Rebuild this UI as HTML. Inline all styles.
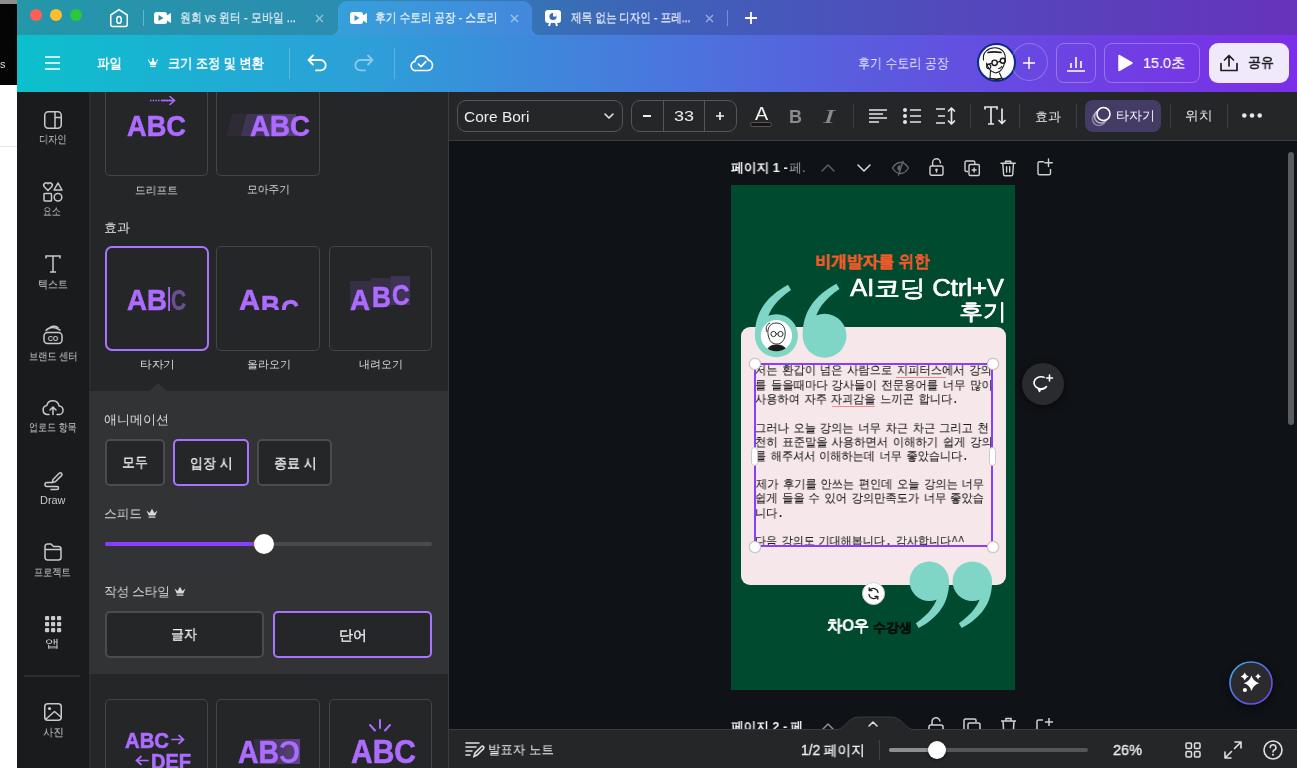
<!DOCTYPE html><html><head><meta charset="utf-8"><style>
*{box-sizing:border-box;margin:0;padding:0}
html,body{width:1297px;height:768px;overflow:hidden;background:#fff;font-family:"Liberation Sans",sans-serif}
.a{position:absolute}
.t{position:absolute;white-space:nowrap;transform-origin:0 0;will-change:transform}
svg{overflow:visible}
</style></head><body><div class="a" style="left:0px;top:0px;width:17px;height:768px;background:#fff"></div><div class="a" style="left:0px;top:0px;width:17px;height:4px;background:#8e8e8e"></div><div class="a" style="left:0px;top:4px;width:17px;height:81px;background:#050505"></div><div class="a" style="left:0px;top:146px;width:17px;height:1px;background:#e6e6e6"></div><div class="t" style="left:0.00px;top:59.00px;font-size:11px;line-height:11px;color:#ddd;font-weight:400;font-family:'Liberation Sans',sans-serif;">s</div><div class="a" style="left:17px;top:0px;width:1280px;height:35px;background:linear-gradient(90deg,#2497a9 0%,#2b8db0 25%,#3e62b8 50%,#5447bd 75%,#6633b9 100%)"></div><div class="a" style="left:17px;top:35px;width:1280px;height:57px;background:linear-gradient(90deg,#0cc0cc 0%,#22aad5 18%,#2e9ed8 28%,#4480dc 45%,#5a5cde 66%,#6c43e3 82%,#7c2ee8 100%)"></div><div class="a" style="left:30px;top:9px;width:12px;height:12px;border-radius:50%;background:#fe5f57"></div><div class="a" style="left:50px;top:9px;width:12px;height:12px;border-radius:50%;background:#febc2e"></div><div class="a" style="left:70px;top:9px;width:12px;height:12px;border-radius:50%;background:#28c840"></div><svg class="a" style="left:109px;top:8px" width="20" height="20" viewBox="0 0 20 20"><path d="M1.75 7 L10 1.6 L18.25 7 V16.5 a2 2 0 0 1 -2 2 H3.75 a2 2 0 0 1 -2 -2 Z" fill="none" stroke="#fff" stroke-width="1.5" stroke-linejoin="round"/><ellipse cx="10" cy="11.9" rx="2.3" ry="3.4" fill="none" stroke="#fff" stroke-width="1.5"/></svg><div class="a" style="left:143px;top:10px;width:1px;height:16px;background:rgba(255,255,255,.3)"></div><div class="a" style="left:330px;top:27px;width:8px;height:8px;background:radial-gradient(circle at 0 0,transparent 8px,#379fda 8.5px)"></div><div class="a" style="left:532px;top:27px;width:8px;height:8px;background:radial-gradient(circle at 100% 0,transparent 8px,#4388dc 8.5px)"></div><div class="a" style="left:338px;top:1px;width:194px;height:34px;border-radius:9px 9px 0 0;background:linear-gradient(90deg,#379fda,#4388dc)"></div><svg class="a" style="left:154px;top:12px" width="18" height="12" viewBox="0 0 18 12"><rect x="0" y="0" width="13" height="12" rx="2.5" fill="#fff"/><path d="M12 4 L17 1 V11 L12 8 Z" fill="#fff"/><path d="M4.5 3 L9.5 6 L4.5 9 Z" fill="#2590ac"/></svg><div class="t" style="left:180.16px;top:11.00px;font-size:13px;line-height:13px;color:#e6eef4;font-weight:400;font-family:'Liberation Sans',sans-serif;transform:scaleX(0.8444);-webkit-text-stroke:0.25px currentColor">원회 vs 윈터 - 모바일 ...</div><svg class="a" style="left:315.5px;top:14.5px" width="7" height="7" viewBox="0 0 7 7"><path d="M0 0 L7 7 M7 0 L0 7" stroke="rgba(255,255,255,.5)" stroke-width="1.2"/></svg><svg class="a" style="left:350px;top:12px" width="18" height="12" viewBox="0 0 18 12"><rect x="0" y="0" width="13" height="12" rx="2.5" fill="#fff"/><path d="M12 4 L17 1 V11 L12 8 Z" fill="#fff"/><path d="M4.5 3 L9.5 6 L4.5 9 Z" fill="#3a96d9"/></svg><div class="t" style="left:375.18px;top:11.00px;font-size:13px;line-height:13px;color:#eef4fb;font-weight:400;font-family:'Liberation Sans',sans-serif;transform:scaleX(0.8219);-webkit-text-stroke:0.25px currentColor">후기 수토리 공장 - 스토리</div><svg class="a" style="left:510.5px;top:14.5px" width="7" height="7" viewBox="0 0 7 7"><path d="M0 0 L7 7 M7 0 L0 7" stroke="rgba(255,255,255,.5)" stroke-width="1.2"/></svg><svg class="a" style="left:544px;top:9px" width="18" height="18" viewBox="0 0 18 18"><rect x="1" y="1" width="16" height="13" rx="3" fill="#fff"/><path d="M6 14 L5 17 M12 14 L13 17" stroke="#fff" stroke-width="2"/><circle cx="9" cy="7.5" r="3.6" fill="#3f66bd"/><path d="M9 7.5 V3.9 A3.6 3.6 0 0 1 12.6 7.5 Z" fill="#fff"/></svg><div class="t" style="left:571.00px;top:11.00px;font-size:13px;line-height:13px;color:#e8ecf8;font-weight:400;font-family:'Liberation Sans',sans-serif;transform:scaleX(0.8151);-webkit-text-stroke:0.25px currentColor">제목 없는 디자인 - 프레...</div><svg class="a" style="left:705.5px;top:14.5px" width="7" height="7" viewBox="0 0 7 7"><path d="M0 0 L7 7 M7 0 L0 7" stroke="rgba(255,255,255,.5)" stroke-width="1.2"/></svg><div class="a" style="left:727px;top:10px;width:1px;height:16px;background:rgba(255,255,255,.3)"></div><svg class="a" style="left:744px;top:11px" width="14" height="14" viewBox="0 0 14 14"><path d="M7 1 V13 M1 7 H13" stroke="#fff" stroke-width="1.8"/></svg><svg class="a" style="left:45px;top:56px" width="15" height="14" viewBox="0 0 15 14"><path d="M0 1 H15 M0 7 H15 M0 13 H15" stroke="#fff" stroke-width="1.6"/></svg><div class="t" style="left:97.00px;top:55.50px;font-size:14px;line-height:14px;color:#fff;font-weight:700;font-family:'Liberation Sans',sans-serif;transform:scaleX(0.8889);">파일</div><svg class="a" style="left:148px;top:58px" width="10" height="9" viewBox="0 0 10 9"><path d="M0.5 2.5 L2.3 7 H7.7 L9.5 2.5 L7 4.6 L5 1 L3 4.6 Z M2.3 7.8 H7.7 V9 H2.3Z" fill="#fff"/><circle cx="5" cy="0.9" r="0.9" fill="#fff"/><circle cx="0.6" cy="2.2" r="0.7" fill="#fff"/><circle cx="9.4" cy="2.2" r="0.7" fill="#fff"/></svg><div class="t" style="left:168.13px;top:55.50px;font-size:14px;line-height:14px;color:#fff;font-weight:700;font-family:'Liberation Sans',sans-serif;transform:scaleX(0.8716);">크기 조정 및 변환</div><div class="a" style="left:289px;top:48px;width:1px;height:31px;background:rgba(255,255,255,.22)"></div><svg class="a" style="left:307px;top:54px" width="21" height="17" viewBox="0 0 21 17"><path d="M6 1.5 L1.5 6 L6 10.5 M1.5 6 H13.5 a5.2 5.2 0 0 1 0 10.4 H9" fill="none" stroke="#fff" stroke-width="1.8" stroke-linecap="round" stroke-linejoin="round"/></svg><svg class="a" style="left:353px;top:54px" width="21" height="17" viewBox="0 0 21 17"><g transform="translate(21,0) scale(-1,1)"><path d="M6 1.5 L1.5 6 L6 10.5 M1.5 6 H13.5 a5.2 5.2 0 0 1 0 10.4 H9" fill="none" stroke="rgba(255,255,255,.45)" stroke-width="1.8" stroke-linecap="round" stroke-linejoin="round"/></g></svg><div class="a" style="left:394px;top:48px;width:1px;height:31px;background:rgba(255,255,255,.22)"></div><svg class="a" style="left:410px;top:53px" width="24" height="19" viewBox="0 0 24 19"><path d="M6.5 17.5 H17.5 a5.2 5.2 0 0 0 0.8 -10.3 a7 7 0 0 0 -13.3 1.2 a4.6 4.6 0 0 0 1.5 9.1 Z" fill="none" stroke="#fff" stroke-width="1.7" stroke-linejoin="round"/><path d="M8.3 11 L11 13.6 L15.8 8.6" fill="none" stroke="#fff" stroke-width="1.7" stroke-linecap="round" stroke-linejoin="round"/></svg><div class="t" style="left:858.14px;top:55.50px;font-size:14px;line-height:14px;color:#ebe8fa;font-weight:400;font-family:'Liberation Sans',sans-serif;transform:scaleX(0.8571);">후기 수토리 공장</div><div class="a" style="left:977px;top:43px;width:39px;height:39px;border-radius:50%;background:#0c2a8a"></div><div class="a" style="left:979px;top:45px;width:35px;height:35px;border-radius:50%;background:#fbfbfb"></div><svg class="a" style="left:977px;top:43px" width="39" height="39" viewBox="0 0 39 39"><clipPath id="avc"><circle cx="19.5" cy="19.5" r="17.5"/></clipPath><g clip-path="url(#avc)" fill="none" stroke="#1a1a1a" stroke-width="1.1" stroke-linecap="round"><path d="M3 38 C 8 34.5, 14 35, 19 36 C 24 35, 30 34.5, 36 38 V42 H3 Z" fill="#1a1a1a"/><path d="M6.5 17 C 5 9, 12 4.6, 18 4.7 C 24 4.8, 28.5 9, 28.3 15.5"/><path d="M9.5 20 C 10.5 25, 13.5 28.5, 18.5 30 C 23 29.5, 27 25, 28.3 16"/><path d="M11 9.5 C 15 8.5, 20 8.8, 24 9.5" stroke-width="1.6"/><circle cx="17.6" cy="19.8" r="2.7" stroke-width="1.4"/><circle cx="25.8" cy="17.8" r="2.5" stroke-width="1.4"/><path d="M20.3 19.2 L23.3 18.4 M14.9 20.2 L9.5 21.5"/><circle cx="11.7" cy="23.5" r="2.1"/><path d="M13.5 27.5 L13 35.5 M22.5 30 L24.5 34.5 M21.5 25.5 C 23 25.5, 24.2 24.6, 24.8 23.5"/></g></svg><div class="a" style="left:1011px;top:43px;width:37px;height:38px;border-radius:50%;border:1px solid rgba(255,255,255,.25)"></div><svg class="a" style="left:1023px;top:57px" width="12" height="12" viewBox="0 0 12 12"><path d="M6 0 V12 M0 6 H12" stroke="#fff" stroke-width="1.5"/></svg><div class="a" style="left:1056px;top:43px;width:40px;height:40px;border-radius:8px;border:1px solid rgba(255,255,255,.28)"></div><svg class="a" style="left:1066px;top:53px" width="20" height="19" viewBox="0 0 20 19"><path d="M1 18 H19 M5 15 V10 M10 15 V4 M15 15 V8" stroke="#fff" stroke-width="1.6"/></svg><div class="a" style="left:1104px;top:43px;width:96px;height:40px;border-radius:8px;border:1px solid rgba(255,255,255,.28)"></div><svg class="a" style="left:1117px;top:54px" width="16" height="18" viewBox="0 0 16 18"><path d="M2 1.5 L15 9 L2 16.5 Z" fill="#fff" stroke="#fff" stroke-width="1.5" stroke-linejoin="round"/></svg><div class="t" style="left:1143.04px;top:55.00px;font-size:15px;line-height:15px;color:#fff;font-weight:400;font-family:'Liberation Sans',sans-serif;transform:scaleX(0.9643);-webkit-text-stroke:0.15px #fff">15.0초</div><div class="a" style="left:1209px;top:43px;width:80px;height:40px;border-radius:9px;background:#efe9fb"></div><svg class="a" style="left:1219px;top:54px" width="20" height="18" viewBox="0 0 20 18"><path d="M10 12 V1.5 M5.5 6 L10 1.5 L14.5 6 M2 9.5 V16.5 H18 V9.5" fill="none" stroke="#1d1d1f" stroke-width="1.7" stroke-linecap="round" stroke-linejoin="round"/></svg><div class="t" style="left:1248.08px;top:55.00px;font-size:14px;line-height:14px;color:#1d1d1f;font-weight:700;font-family:'Liberation Sans',sans-serif;transform:scaleX(0.9231);">공유</div><div class="a" style="left:17px;top:92px;width:72px;height:676px;background:#1a1b1d"></div><svg class="a" style="left:44px;top:111px" width="18" height="18" viewBox="0 0 18 18"><g fill="none" stroke="#c9cacc" stroke-width="1.5" stroke-linecap="round" stroke-linejoin="round"><rect x="0.75" y="0.75" width="16.5" height="16.5" rx="3.5"/><path d="M11 0.75 V17.25 M11 6.5 H17.25"/></g></svg><div class="t" style="left:39.17px;top:133.50px;font-size:11px;line-height:11px;color:#c9cacc;font-weight:400;font-family:'Liberation Sans',sans-serif;transform:scaleX(0.8333);">디자인</div><svg class="a" style="left:43px;top:182px" width="20" height="20" viewBox="0 0 20 20"><g fill="none" stroke="#c9cacc" stroke-width="1.5" stroke-linecap="round" stroke-linejoin="round"><path d="M5 8.5 L1.3 4.8 A2.2 2.2 0 0 1 5 1.8 A2.2 2.2 0 0 1 8.7 4.8 Z"/><path d="M15 1 L19 8 H11 Z"/><rect x="1" y="11.5" width="7.5" height="7.5" rx="0.8"/><circle cx="15" cy="15.2" r="3.8"/></g></svg><div class="t" style="left:43.20px;top:205.50px;font-size:11px;line-height:11px;color:#c9cacc;font-weight:400;font-family:'Liberation Sans',sans-serif;transform:scaleX(0.8000);">요소</div><svg class="a" style="left:45px;top:255px" width="16" height="18" viewBox="0 0 16 18"><g fill="none" stroke="#c9cacc" stroke-width="1.5"><path d="M1 3.5 V1 H15 V3.5 M8 1 V17 M5 17 H11"/></g></svg><div class="t" style="left:38.10px;top:278.50px;font-size:11px;line-height:11px;color:#c9cacc;font-weight:400;font-family:'Liberation Sans',sans-serif;transform:scaleX(0.9032);">텍스트</div><svg class="a" style="left:43px;top:325px" width="20" height="20" viewBox="0 0 20 20"><g fill="none" stroke="#c9cacc" stroke-width="1.5" stroke-linecap="round" stroke-linejoin="round"><rect x="1" y="7.5" width="18" height="11" rx="3.5"/><path d="M3 5.5 C 6 2 11 1.5 17 5 M6 3.5 C 8 1 12 0.5 15 2.5"/></g><text x="10" y="16.3" font-size="7" font-weight="bold" fill="#c9cacc" text-anchor="middle" font-family="Liberation Sans">CO</text></svg><div class="t" style="left:29.16px;top:350.50px;font-size:11px;line-height:11px;color:#c9cacc;font-weight:400;font-family:'Liberation Sans',sans-serif;transform:scaleX(0.8364);">브랜드 센터</div><svg class="a" style="left:42px;top:398px" width="22" height="18" viewBox="0 0 22 18"><g fill="none" stroke="#c9cacc" stroke-width="1.5" stroke-linecap="round" stroke-linejoin="round"><path d="M7 16.5 H5.5 a4.5 4.5 0 0 1 -0.8 -8.9 a6.3 6.3 0 0 1 12.3 0.3 a4.3 4.3 0 0 1 -0.5 8.6 H15"/><path d="M11 16.5 V9.5 M8 12 L11 9 L14 12"/></g></svg><div class="t" style="left:29.18px;top:422.00px;font-size:11px;line-height:11px;color:#c9cacc;font-weight:400;font-family:'Liberation Sans',sans-serif;transform:scaleX(0.8214);">업로드 항목</div><svg class="a" style="left:44px;top:471px" width="18" height="18" viewBox="0 0 18 18"><g fill="none" stroke="#c9cacc" stroke-width="1.5" stroke-linecap="round" stroke-linejoin="round"><path d="M9 8.5 L15.2 2.3 a1.6 1.6 0 0 1 2.3 2.3 L11.3 10.8 L8.3 11.5 Z"/><path d="M8 11.5 H3 a2 2 0 0 0 0 4 H13 a1.5 1.5 0 0 1 0 3 H7"/></g></svg><div class="t" style="left:39.96px;top:495.00px;font-size:10.5px;line-height:10.5px;color:#c9cacc;font-weight:400;font-family:'Liberation Sans',sans-serif;transform:scaleX(1.0417);">Draw</div><svg class="a" style="left:44px;top:543px" width="18" height="18" viewBox="0 0 18 18"><g fill="none" stroke="#c9cacc" stroke-width="1.5" stroke-linecap="round" stroke-linejoin="round"><path d="M1 3.5 a2.5 2.5 0 0 1 2.5 -2.5 H7 L9.5 3.5 H14.5 a2.5 2.5 0 0 1 2.5 2.5 V14.5 a2.5 2.5 0 0 1 -2.5 2.5 H3.5 a2.5 2.5 0 0 1 -2.5 -2.5 Z M1 6.5 H17"/></g></svg><div class="t" style="left:34.17px;top:566.50px;font-size:11px;line-height:11px;color:#c9cacc;font-weight:400;font-family:'Liberation Sans',sans-serif;transform:scaleX(0.8333);">프로젝트</div><svg class="a" style="left:44px;top:615px" width="18" height="18" viewBox="0 0 18 18"><rect x="1" y="1" width="4.2" height="4.2" rx="1" fill="#c9cacc"/><rect x="1" y="7" width="4.2" height="4.2" rx="1" fill="#c9cacc"/><rect x="1" y="13" width="4.2" height="4.2" rx="1" fill="#c9cacc"/><rect x="7" y="1" width="4.2" height="4.2" rx="1" fill="#c9cacc"/><rect x="7" y="7" width="4.2" height="4.2" rx="1" fill="#c9cacc"/><rect x="7" y="13" width="4.2" height="4.2" rx="1" fill="#c9cacc"/><rect x="13" y="1" width="4.2" height="4.2" rx="1" fill="#c9cacc"/><rect x="13" y="7" width="4.2" height="4.2" rx="1" fill="#c9cacc"/><rect x="13" y="13" width="4.2" height="4.2" rx="1" fill="#c9cacc"/></svg><div class="t" style="left:44.67px;top:638.00px;font-size:11px;line-height:11px;color:#c9cacc;font-weight:400;font-family:'Liberation Sans',sans-serif;transform:scaleX(1.3333);">앱</div><div class="a" style="left:24px;top:675px;width:56px;height:2px;background:#2c2d30"></div><svg class="a" style="left:44px;top:703px" width="18" height="18" viewBox="0 0 18 18"><g fill="none" stroke="#c9cacc" stroke-width="1.5" stroke-linecap="round" stroke-linejoin="round"><rect x="0.75" y="0.75" width="16.5" height="16.5" rx="3"/><path d="M1.5 16.5 L10.5 8.5 L17 14"/></g><circle cx="5.5" cy="5.5" r="1.6" fill="#c9cacc"/></svg><div class="t" style="left:43.05px;top:726.50px;font-size:11px;line-height:11px;color:#c9cacc;font-weight:400;font-family:'Liberation Sans',sans-serif;transform:scaleX(0.9474);">사진</div><div class="a" style="left:89px;top:92px;width:359px;height:676px;background:#252628"></div><div class="a" style="left:448px;top:92px;width:1px;height:676px;background:#3a3b3e"></div><div class="a" style="left:89px;top:92px;width:2px;height:676px;background:#2a2b2d"></div><div class="a" style="left:105px;top:92px;width:103px;height:84px;border:1px solid #444548;border-radius:5px;border-top:none;border-radius:0 0 5px 5px"></div><div class="a" style="left:216px;top:92px;width:104px;height:84px;border:1px solid #444548;border-radius:5px;border-top:none;border-radius:0 0 5px 5px"></div><div class="t" style="left:135.02px;top:184.50px;font-size:11px;line-height:11px;color:#d8d9db;font-weight:400;font-family:'Liberation Sans',sans-serif;transform:scaleX(0.9762);">드리프트</div><div class="t" style="left:247.02px;top:184.00px;font-size:11px;line-height:11px;color:#d8d9db;font-weight:400;font-family:'Liberation Sans',sans-serif;transform:scaleX(0.9756);">모아주기</div><div class="t" style="left:104.00px;top:220.50px;font-size:13px;line-height:13px;color:#e6e7e9;font-weight:400;font-family:'Liberation Sans',sans-serif;">효과</div><div class="a" style="left:105px;top:246px;width:104px;height:105px;border:2px solid #a873ff;border-radius:7px"></div><div class="a" style="left:216px;top:246px;width:104px;height:105px;border:1px solid #444548;border-radius:5px"></div><div class="a" style="left:329px;top:246px;width:103px;height:105px;border:1px solid #444548;border-radius:5px"></div><div class="t" style="left:139.93px;top:358.50px;font-size:11px;line-height:11px;color:#d8d9db;font-weight:400;font-family:'Liberation Sans',sans-serif;transform:scaleX(1.0667);">타자기</div><div class="t" style="left:247.00px;top:358.50px;font-size:11px;line-height:11px;color:#d8d9db;font-weight:400;font-family:'Liberation Sans',sans-serif;">올라오기</div><div class="t" style="left:359.00px;top:358.50px;font-size:11px;line-height:11px;color:#d8d9db;font-weight:400;font-family:'Liberation Sans',sans-serif;">내려오기</div><div class="a" style="left:89px;top:391px;width:359px;height:283px;background:#323335"></div><svg class="a" style="left:148px;top:382px" width="20" height="10" viewBox="0 0 20 10"><path d="M0 10 L10 1 L20 10 Z" fill="#323335"/></svg><div class="t" style="left:104.00px;top:414.00px;font-size:12.5px;line-height:12.5px;color:#d8d9db;font-weight:400;font-family:'Liberation Sans',sans-serif;">애니메이션</div><div class="a" style="left:105px;top:439px;width:60px;height:47px;border:2px solid #4b4c4f;border-radius:5px;background:#252628"></div><div class="a" style="left:173px;top:439px;width:76px;height:47px;border:2px solid #a873ff;border-radius:5px;background:#252628"></div><div class="a" style="left:257px;top:439px;width:75px;height:47px;border:2px solid #4b4c4f;border-radius:5px;background:#252628"></div><div class="t" style="left:122.08px;top:456.00px;font-size:13.5px;line-height:13.5px;color:#f0f0f2;font-weight:400;font-family:'Liberation Sans',sans-serif;transform:scaleX(0.9231);-webkit-text-stroke:0.3px #f0f0f2">모두</div><div class="t" style="left:190.07px;top:456.50px;font-size:13.5px;line-height:13.5px;color:#f0f0f2;font-weight:400;font-family:'Liberation Sans',sans-serif;transform:scaleX(0.9302);-webkit-text-stroke:0.3px #f0f0f2">입장 시</div><div class="t" style="left:274.07px;top:456.50px;font-size:13.5px;line-height:13.5px;color:#f0f0f2;font-weight:400;font-family:'Liberation Sans',sans-serif;transform:scaleX(0.9302);-webkit-text-stroke:0.3px #f0f0f2">종료 시</div><div class="t" style="left:104.03px;top:508.00px;font-size:12.5px;line-height:12.5px;color:#d8d9db;font-weight:400;font-family:'Liberation Sans',sans-serif;transform:scaleX(0.9730);">스피드</div><svg class="a" style="left:146px;top:508px" width="12" height="10" viewBox="0 0 12 10"><path d="M0.5 2.5 L2.7 7.5 H9.3 L11.5 2.5 L8.4 5 L6 0.8 L3.6 5 Z M2.6 8.5 H9.4 V9.8 H2.6 Z" fill="#d8d9db"/></svg><div class="a" style="left:105px;top:542px;width:327px;height:4px;border-radius:2px;background:#4a4b4e"></div><div class="a" style="left:105px;top:542px;width:160px;height:4px;border-radius:2px;background:#8b3dff"></div><div class="a" style="left:254px;top:534px;width:20px;height:20px;border-radius:50%;background:#fff"></div><div class="t" style="left:104.03px;top:586.00px;font-size:12.5px;line-height:12.5px;color:#d8d9db;font-weight:400;font-family:'Liberation Sans',sans-serif;transform:scaleX(0.9692);">작성 스타일</div><svg class="a" style="left:174px;top:586px" width="12" height="10" viewBox="0 0 12 10"><path d="M0.5 2.5 L2.7 7.5 H9.3 L11.5 2.5 L8.4 5 L6 0.8 L3.6 5 Z M2.6 8.5 H9.4 V9.8 H2.6 Z" fill="#d8d9db"/></svg><div class="a" style="left:105px;top:611px;width:159px;height:47px;border:2px solid #4b4c4f;border-radius:5px;background:#252628"></div><div class="a" style="left:273px;top:611px;width:159px;height:47px;border:2px solid #a873ff;border-radius:5px;background:#252628"></div><div class="t" style="left:171.07px;top:628.00px;font-size:13.5px;line-height:13.5px;color:#f0f0f2;font-weight:400;font-family:'Liberation Sans',sans-serif;transform:scaleX(0.9259);-webkit-text-stroke:0.3px #f0f0f2">글자</div><div class="t" style="left:339.00px;top:628.50px;font-size:13.5px;line-height:13.5px;color:#f0f0f2;font-weight:400;font-family:'Liberation Sans',sans-serif;-webkit-text-stroke:0.3px #f0f0f2">단어</div><div class="a" style="left:105px;top:699px;width:103px;height:90px;border:1px solid #444548;border-radius:5px"></div><div class="a" style="left:216px;top:699px;width:104px;height:90px;border:1px solid #444548;border-radius:5px"></div><div class="a" style="left:329px;top:699px;width:103px;height:90px;border:1px solid #444548;border-radius:5px"></div><svg class="a" style="left:0px;top:0px" width="1297" height="768" viewBox="0 0 1297 768"><text x="127" y="136" font-family="Liberation Sans" font-weight="bold" font-size="30" fill="#ad6cff" stroke="#ad6cff" stroke-width="0.6" textLength="59" lengthAdjust="spacingAndGlyphs" >ABC</text><path d="M150 100.5 H174" stroke="#ad6cff" stroke-width="1.6" stroke-dasharray="1.5 1.2"/><path d="M162 100.5 H174 M170 96.5 L174.5 100.5 L170 104.5" fill="none" stroke="#ad6cff" stroke-width="1.6" stroke-linecap="round"/><defs><linearGradient id="trail" x1="0" x2="1"><stop offset="0" stop-color="#a96dff" stop-opacity="0"/><stop offset="1" stop-color="#a96dff" stop-opacity=".45"/></linearGradient></defs><path d="M226 136 L232 114 H296 V136 Z" fill="#a96dff" fill-opacity=".07"/><path d="M241 136 L247 114 H296 V136 Z" fill="#a96dff" fill-opacity=".16"/><path d="M268 136 L272 114 H296 V136 Z" fill="#a96dff" fill-opacity=".12"/><text x="250" y="136" font-family="Liberation Sans" font-weight="bold" font-size="30" fill="#ad6cff" stroke="#ad6cff" stroke-width="0.6" textLength="60" lengthAdjust="spacingAndGlyphs" >ABC</text><text x="127" y="310" font-family="Liberation Sans" font-weight="bold" font-size="30" fill="#ad6cff" stroke="#ad6cff" stroke-width="0.6" textLength="40" lengthAdjust="spacingAndGlyphs" >AB</text><rect x="168.2" y="287" width="1.8" height="24" fill="#ad6cff"/><text x="171" y="310" font-family="Liberation Sans" font-weight="bold" font-size="30" fill="#6b4f90" stroke="#6b4f90" stroke-width="0.6" textLength="15" lengthAdjust="spacingAndGlyphs" >C</text><clipPath id="rc"><rect x="200" y="270" width="150" height="40"/></clipPath><g clip-path="url(#rc)"><text x="239" y="310" font-family="Liberation Sans" font-weight="bold" font-size="30" fill="#ad6cff" stroke="#ad6cff" stroke-width="0.6" textLength="21" lengthAdjust="spacingAndGlyphs" >A</text><text x="261" y="316" font-family="Liberation Sans" font-weight="bold" font-size="30" fill="#ad6cff" stroke="#ad6cff" stroke-width="0.6" textLength="19" lengthAdjust="spacingAndGlyphs" >B</text><text x="281" y="319.5" font-family="Liberation Sans" font-weight="bold" font-size="30" fill="#ad6cff" stroke="#ad6cff" stroke-width="0.6" textLength="18" lengthAdjust="spacingAndGlyphs" >C</text></g><linearGradient id="fg" x1="0" y1="0" x2="0" y2="1"><stop offset="0" stop-color="#a96dff" stop-opacity="0"/><stop offset="1" stop-color="#a96dff" stop-opacity=".5"/></linearGradient><rect x="350" y="281" width="21" height="29" fill="#a96dff" fill-opacity=".14"/><rect x="371" y="278" width="20" height="29" fill="#a96dff" fill-opacity=".14"/><rect x="391" y="276" width="19" height="29" fill="#a96dff" fill-opacity=".2"/><text x="350" y="310" font-family="Liberation Sans" font-weight="bold" font-size="30" fill="#ad6cff" stroke="#ad6cff" stroke-width="0.6" textLength="20" lengthAdjust="spacingAndGlyphs" >A</text><text x="372" y="307" font-family="Liberation Sans" font-weight="bold" font-size="30" fill="#ad6cff" stroke="#ad6cff" stroke-width="0.6" textLength="19" lengthAdjust="spacingAndGlyphs" >B</text><text x="392" y="305" font-family="Liberation Sans" font-weight="bold" font-size="30" fill="#ad6cff" stroke="#ad6cff" stroke-width="0.6" textLength="17.5" lengthAdjust="spacingAndGlyphs" >C</text><text x="125" y="748" font-family="Liberation Sans" font-weight="bold" font-size="22" fill="#ad6cff" stroke="#ad6cff" stroke-width="0.6" textLength="44" lengthAdjust="spacingAndGlyphs" >ABC</text><path d="M172 739.5 H183 M179 735.5 L183.5 739.5 L179 743.5" fill="none" stroke="#ad6cff" stroke-width="1.7" stroke-linecap="round"/><path d="M148 760.5 H137 M141 756.5 L136.5 760.5 L141 764.5" fill="none" stroke="#ad6cff" stroke-width="1.7" stroke-linecap="round"/><text x="151" y="769" font-family="Liberation Sans" font-weight="bold" font-size="22" fill="#ad6cff" stroke="#ad6cff" stroke-width="0.6" textLength="40" lengthAdjust="spacingAndGlyphs" >DEF</text><linearGradient id="hg" x1="0" x2="1"><stop offset="0" stop-color="#a96dff" stop-opacity=".12"/><stop offset="1" stop-color="#a96dff" stop-opacity=".42"/></linearGradient><rect x="254" y="739" width="46" height="25" fill="url(#hg)"/><text x="238" y="763" font-family="Liberation Sans" font-weight="bold" font-size="32" fill="#ad6cff" stroke="#ad6cff" stroke-width="0.6" textLength="41" lengthAdjust="spacingAndGlyphs" >AB</text><g transform="translate(579,0) scale(-1,1)"><text x="279" y="763" font-family="Liberation Sans" font-weight="bold" font-size="32" fill="#a96dff" textLength="21" lengthAdjust="spacingAndGlyphs">C</text></g><text x="351" y="763" font-family="Liberation Sans" font-weight="bold" font-size="33" fill="#ad6cff" stroke="#ad6cff" stroke-width="0.6" textLength="65" lengthAdjust="spacingAndGlyphs" >ABC</text><path d="M370 725 L375 730.5 M380 720 V728 M390 725 L385 730.5" stroke="#ad6cff" stroke-width="2" stroke-linecap="round"/></svg><div class="a" style="left:449px;top:92px;width:848px;height:49px;background:#252628;border-bottom:1px solid #3a3b3e"></div><div class="a" style="left:457px;top:100px;width:166px;height:32px;border:1px solid #55565a;border-radius:9px"></div><div class="t" style="left:463.97px;top:108.50px;font-size:15px;line-height:15px;color:#eeeeef;font-weight:400;font-family:'Liberation Sans',sans-serif;transform:scaleX(1.0328);">Core Bori</div><svg class="a" style="left:604px;top:113px" width="10" height="6" viewBox="0 0 10 6"><path d="M1 1 L5 5 L9 1" fill="none" stroke="#e6e6e8" stroke-width="1.6" stroke-linecap="round" stroke-linejoin="round"/></svg><div class="a" style="left:631px;top:100px;width:106px;height:32px;border:1px solid #55565a;border-radius:9px"></div><div class="a" style="left:663px;top:100px;width:1px;height:32px;background:#55565a"></div><div class="a" style="left:704px;top:100px;width:1px;height:32px;background:#55565a"></div><div class="a" style="left:643px;top:115.2px;width:8px;height:1.8px;background:#eee"></div><div class="t" style="left:673.80px;top:108.00px;font-size:15px;line-height:15px;color:#eeeeef;font-weight:400;font-family:'Liberation Sans',sans-serif;transform:scaleX(1.2000);">33</div><svg class="a" style="left:716px;top:112px" width="8" height="8" viewBox="0 0 8 8"><path d="M4 0 V8 M0 4 H8" stroke="#eee" stroke-width="1.7"/></svg><div class="t" style="left:754.50px;top:103.50px;font-size:19px;line-height:19px;color:#f4f4f4;font-weight:400;font-family:'Liberation Sans',sans-serif;transform:scaleX(1.0385);">A</div><div class="a" style="left:750px;top:122px;width:22px;height:4.5px;border-radius:2.5px;background:#151515;border:1px solid #5a5552"></div><div class="t" style="left:789.00px;top:107.50px;font-size:18px;line-height:18px;color:#8a8b8e;font-weight:700;font-family:'Liberation Sans',sans-serif;">B</div><div class="t" style="left:823.00px;top:107.50px;font-size:18px;line-height:18px;color:#8a8b8e;font-weight:400;font-family:'Liberation Sans',sans-serif;transform:scaleX(2.0000);font-style:italic;font-family:Liberation Serif,serif">I</div><div class="a" style="left:853px;top:104px;width:1px;height:24px;background:#3e3f42"></div><svg class="a" style="left:869px;top:109px" width="18" height="14" viewBox="0 0 18 14"><path d="M0 1 H18 M0 5 H14 M0 9 H18 M0 13 H10" stroke="#e6e6e8" stroke-width="1.7"/></svg><svg class="a" style="left:903px;top:108px" width="18" height="16" viewBox="0 0 18 16"><g fill="#e6e6e8"><circle cx="2" cy="2" r="2"/><circle cx="2" cy="8" r="2"/><circle cx="2" cy="14" r="2"/></g><path d="M7 2 H18 M7 8 H18 M7 14 H18" stroke="#e6e6e8" stroke-width="1.7"/></svg><svg class="a" style="left:936px;top:107px" width="20" height="18" viewBox="0 0 20 18"><path d="M0 2 H9 M2 9 H9 M0 16 H9" stroke="#e6e6e8" stroke-width="1.7"/><path d="M15.5 1 V17 M12.5 4 L15.5 1 L18.5 4 M12.5 14 L15.5 17 L18.5 14" fill="none" stroke="#e6e6e8" stroke-width="1.7" stroke-linecap="round" stroke-linejoin="round"/></svg><div class="a" style="left:970px;top:104px;width:1px;height:24px;background:#3e3f42"></div><svg class="a" style="left:984px;top:106px" width="22" height="19" viewBox="0 0 22 19"><path d="M1 3.5 V1 H13 V3.5 M7 1 V18 M4 18 H10" fill="none" stroke="#e6e6e8" stroke-width="1.7"/><path d="M18 3 V17.5 M15 14.5 L18 17.5 L21 14.5" fill="none" stroke="#e6e6e8" stroke-width="1.7" stroke-linecap="round" stroke-linejoin="round"/></svg><div class="a" style="left:1019px;top:104px;width:1px;height:24px;background:#3e3f42"></div><div class="t" style="left:1035.00px;top:109.50px;font-size:13px;line-height:13px;color:#eeeeef;font-weight:400;font-family:'Liberation Sans',sans-serif;">효과</div><div class="a" style="left:1076px;top:104px;width:1px;height:24px;background:#3e3f42"></div><div class="a" style="left:1085px;top:100px;width:76px;height:32px;border-radius:8px;background:#453c66"></div><svg class="a" style="left:1090px;top:105px" width="22" height="22" viewBox="0 0 22 22"><g fill="none" stroke-width="1.6"><circle cx="9" cy="14" r="6.5" stroke="#8c83a4"/><circle cx="11" cy="11.5" r="6.5" stroke="#b3abc9" fill="#453c66"/><circle cx="13.5" cy="9" r="6.5" stroke="#fff" fill="#453c66"/></g></svg><div class="t" style="left:1116.00px;top:109.00px;font-size:13px;line-height:13px;color:#f4f2fa;font-weight:400;font-family:'Liberation Sans',sans-serif;">타자기</div><div class="a" style="left:1170px;top:104px;width:1px;height:24px;background:#3e3f42"></div><div class="t" style="left:1184.96px;top:109.00px;font-size:13px;line-height:13px;color:#eeeeef;font-weight:400;font-family:'Liberation Sans',sans-serif;transform:scaleX(1.0435);">위치</div><div class="a" style="left:1227px;top:104px;width:1px;height:24px;background:#3e3f42"></div><svg class="a" style="left:1242px;top:113px" width="20" height="5" viewBox="0 0 20 5"><g fill="#e6e6e8"><circle cx="2.3" cy="2.5" r="2.3"/><circle cx="10" cy="2.5" r="2.3"/><circle cx="17.7" cy="2.5" r="2.3"/></g></svg><div class="a" style="left:449px;top:141px;width:848px;height:589px;background:#0f1216"></div><div class="a" style="left:1288px;top:152px;width:6px;height:273px;border-radius:3px;background:#5b5c60"></div><div class="t" style="left:731.00px;top:161.00px;font-size:13px;line-height:13px;color:#f2f2f3;font-weight:700;font-family:'Liberation Sans',sans-serif;transform:scaleX(0.9825);">페이지 1 -</div><div class="t" style="left:789.00px;top:161.00px;font-size:13px;line-height:13px;color:#9a9ba0;font-weight:400;font-family:'Liberation Sans',sans-serif;">페.</div><svg class="a" style="left:821px;top:164px" width="14" height="8" viewBox="0 0 14 8"><path d="M1 7 L7 1 L13 7" fill="none" stroke="#5d5e63" stroke-width="1.5" stroke-linecap="round" stroke-linejoin="round"/></svg><svg class="a" style="left:857px;top:164px" width="14" height="8" viewBox="0 0 14 8"><path d="M1 1 L7 7 L13 1" fill="none" stroke="#d8d9dc" stroke-width="1.5" stroke-linecap="round" stroke-linejoin="round"/></svg><svg class="a" style="left:891px;top:160px" width="19" height="16" viewBox="0 0 19 16"><g fill="none" stroke="#66676c" stroke-width="1.4" stroke-linecap="round"><path d="M1.5 8 C 4 4 6.5 2.5 9.5 2.5 C 12.5 2.5 15 4 17.5 8 C 15 12 12.5 13.5 9.5 13.5 C 6.5 13.5 4 12 1.5 8 Z"/><path d="M12 1.5 L7.5 15"/></g><path d="M9.5 5 A3 3 0 0 0 8.6 10.9 Z" fill="#66676c"/></svg><svg class="a" style="left:929px;top:158px" width="15" height="18" viewBox="0 0 15 18"><g fill="none" stroke="#d0d1d4" stroke-width="1.4" stroke-linejoin="round"><rect x="1" y="8" width="13" height="9.3" rx="1.5"/><path d="M3.6 8 V5 a3.9 3.9 0 0 1 7.8 -0.6 V5.5"/></g><circle cx="7.5" cy="11.8" r="1.3" fill="#d0d1d4"/><path d="M7.5 12 V14.6" stroke="#d0d1d4" stroke-width="1.3"/></svg><svg class="a" style="left:964px;top:160px" width="17" height="17" viewBox="0 0 17 17"><g fill="none" stroke="#d0d1d4" stroke-width="1.4" stroke-linejoin="round"><path d="M4 11.5 H2.3 A1.3 1.3 0 0 1 1 10.2 V2.3 A1.3 1.3 0 0 1 2.3 1 H9.5 A1.3 1.3 0 0 1 10.8 2.3 V4"/><rect x="5" y="4.5" width="10.3" height="11" rx="1.3"/><path d="M10.15 7.5 V12.5 M7.7 10 H12.6"/></g></svg><svg class="a" style="left:1000px;top:160px" width="17" height="17" viewBox="0 0 17 17"><g fill="none" stroke="#d0d1d4" stroke-width="1.4" stroke-linecap="round" stroke-linejoin="round"><path d="M1 3.3 H15.3 M5.5 3.3 V1.2 H10.8 V3.3 M2.8 3.3 L3.6 14.5 a1.3 1.3 0 0 0 1.3 1.2 H11.4 a1.3 1.3 0 0 0 1.3 -1.2 L13.5 3.3 M6.6 6.8 V12 M9.7 6.8 V12"/></g></svg><svg class="a" style="left:1037px;top:158px" width="17" height="18" viewBox="0 0 17 18"><g fill="none" stroke="#d0d1d4" stroke-width="1.4" stroke-linecap="round" stroke-linejoin="round"><path d="M6.5 3.8 H2.5 A1.5 1.5 0 0 0 1 5.3 V15.2 A1.5 1.5 0 0 0 2.5 16.7 H12 A1.5 1.5 0 0 0 13.5 15.2 V11.5"/><path d="M11.5 1 V8.5 M7.8 4.8 H15.3"/></g></svg><div class="a" style="left:731px;top:185px;width:284px;height:505px;background:#004b30"></div><div class="t" style="left:815.07px;top:253.00px;font-size:17px;line-height:17px;color:#f15a29;font-weight:700;font-family:'Liberation Sans',sans-serif;transform:scaleX(0.9268);text-shadow:0.6px 0 0 #f15a29">비개발자를 위한</div><div class="t" style="left:850.00px;top:276.50px;font-size:23px;line-height:23px;color:#ffffff;font-weight:400;font-family:'Liberation Sans',sans-serif;transform:scaleX(1.1087);-webkit-text-stroke:0.4px #fff;text-shadow:0.5px 0 0 #fff">AI코딩 Ctrl+V</div><div class="t" style="left:958.85px;top:301.00px;font-size:22px;line-height:22px;color:#ffffff;font-weight:400;font-family:'Liberation Sans',sans-serif;transform:scaleX(1.0769);-webkit-text-stroke:0.5px #fff;text-shadow:0.5px 0 0 #fff">후기</div><div class="a" style="left:741px;top:327px;width:265px;height:258px;border-radius:9px;background:#f6e7ea"></div><svg class="a" style="left:0px;top:0px" width="1297" height="768" viewBox="0 0 1297 768"><g transform="translate(776.4,335.7) rotate(0) scale(1)" fill="#80d6c6"><circle cx="0" cy="0" r="21.5"/><path d="M -21.5 0 C -21.5 -24, -10 -39, 11.6 -51 L 14.6 -45.7 C 0 -36, -8.5 -24, -9.4 -13.5 Z"/></g><g transform="translate(824.6,335.7) rotate(0) scale(1.02)" fill="#80d6c6"><circle cx="0" cy="0" r="21.5"/><path d="M -21.5 0 C -21.5 -24, -10 -39, 11.6 -51 L 14.6 -45.7 C 0 -36, -8.5 -24, -9.4 -13.5 Z"/></g><g transform="translate(929.3,581.2) rotate(180) scale(0.92)" fill="#80d6c6"><circle cx="0" cy="0" r="21.5"/><path d="M -21.5 0 C -21.5 -24, -10 -39, 11.6 -51 L 14.6 -45.7 C 0 -36, -8.5 -24, -9.4 -13.5 Z"/></g><g transform="translate(972.3,581.2) rotate(180) scale(0.92)" fill="#80d6c6"><circle cx="0" cy="0" r="21.5"/><path d="M -21.5 0 C -21.5 -24, -10 -39, 11.6 -51 L 14.6 -45.7 C 0 -36, -8.5 -24, -9.4 -13.5 Z"/></g><circle cx="776.4" cy="335.7" r="15.6" fill="#fff"/><clipPath id="av2"><circle cx="776.4" cy="335.7" r="15.6"/></clipPath><g clip-path="url(#av2)" fill="none" stroke="#1a1a1a" stroke-width="0.9"><path d="M767 352 C 768 346 772 345 777 345 C 782 345 786 347 787 352 Z" fill="#1a1a1a"/><path d="M769 338 C 766 330 769 323 776 323 C 783 323 786 328 785 336 C 784 341 781 344 777 344 C 773 344 770 342 769 338 Z" fill="#fff"/><circle cx="773.5" cy="334" r="2.6"/><circle cx="780.5" cy="334" r="2.6"/><path d="M776 334 H778 M767 332 C 765 328 767 324 770 323"/></g></svg><div class="t" style="left:755.06px;top:365.00px;font-size:12px;line-height:12px;color:#1e1e1e;font-weight:400;font-family:'Liberation Mono',monospace;transform:scaleX(0.9398);word-spacing:-2.5px;-webkit-text-stroke:0.12px #1e1e1e">저는 환갑이 넘은 사람으로 지피터스에서 강의</div><div class="t" style="left:755.06px;top:379.80px;font-size:12px;line-height:12px;color:#1e1e1e;font-weight:400;font-family:'Liberation Mono',monospace;transform:scaleX(0.9438);word-spacing:-2.5px;-webkit-text-stroke:0.12px #1e1e1e">를 들을때마다 강사들이 전문용어를 너무 많이</div><div class="t" style="left:755.07px;top:394.10px;font-size:12px;line-height:12px;color:#1e1e1e;font-weight:400;font-family:'Liberation Mono',monospace;transform:scaleX(0.9346);word-spacing:-2.5px;-webkit-text-stroke:0.12px #1e1e1e">사용하여 자주 자괴감을 느끼곤 합니다.</div><div class="t" style="left:755.06px;top:422.50px;font-size:12px;line-height:12px;color:#1e1e1e;font-weight:400;font-family:'Liberation Mono',monospace;transform:scaleX(0.9390);word-spacing:-2.5px;-webkit-text-stroke:0.12px #1e1e1e">그러나 오늘 강의는 너무 차근 차근 그리고 천</div><div class="t" style="left:755.06px;top:436.80px;font-size:12px;line-height:12px;color:#1e1e1e;font-weight:400;font-family:'Liberation Mono',monospace;transform:scaleX(0.9438);word-spacing:-2.5px;-webkit-text-stroke:0.12px #1e1e1e">천히 표준말을 사용하면서 이해하기 쉽게 강의</div><div class="t" style="left:755.07px;top:451.10px;font-size:12px;line-height:12px;color:#1e1e1e;font-weight:400;font-family:'Liberation Mono',monospace;transform:scaleX(0.9292);word-spacing:-2.5px;-webkit-text-stroke:0.12px #1e1e1e">를 해주셔서 이해하는데 너무 좋았습니다.</div><div class="t" style="left:756.00px;top:479.10px;font-size:12px;line-height:12px;color:#1e1e1e;font-weight:400;font-family:'Liberation Mono',monospace;transform:scaleX(0.9342);word-spacing:-2.5px;-webkit-text-stroke:0.12px #1e1e1e">제가 후기를 안쓰는 편인데 오늘 강의는 너무</div><div class="t" style="left:755.06px;top:493.40px;font-size:12px;line-height:12px;color:#1e1e1e;font-weight:400;font-family:'Liberation Mono',monospace;transform:scaleX(0.9380);word-spacing:-2.5px;-webkit-text-stroke:0.12px #1e1e1e">쉽게 들을 수 있어 강의만족도가 너무 좋았습</div><div class="t" style="left:755.07px;top:507.70px;font-size:12px;line-height:12px;color:#1e1e1e;font-weight:400;font-family:'Liberation Mono',monospace;transform:scaleX(0.9259);word-spacing:-2.5px;-webkit-text-stroke:0.12px #1e1e1e">니다.</div><div class="t" style="left:755.08px;top:536.00px;font-size:12px;line-height:12px;color:#1e1e1e;font-weight:400;font-family:'Liberation Mono',monospace;transform:scaleX(0.9204);word-spacing:-2.5px;-webkit-text-stroke:0.12px #1e1e1e">다음 강의도 기대해봅니다. 감사합니다^^</div><div class="a" style="left:896px;top:376.5px;width:50px;height:1px;background:rgba(230,60,60,.55)"></div><div class="a" style="left:832px;top:405.5px;width:43px;height:1px;background:rgba(230,60,60,.55)"></div><div class="a" style="left:754px;top:363px;width:239px;height:184px;border:2px solid #8b3dff"></div><div class="a" style="left:748.5px;top:357.5px;width:12px;height:12px;border-radius:50%;background:#fff;border:1px solid #c9c9cf;box-shadow:0 0 1px rgba(0,0,0,.3)"></div><div class="a" style="left:986.5px;top:357.5px;width:12px;height:12px;border-radius:50%;background:#fff;border:1px solid #c9c9cf;box-shadow:0 0 1px rgba(0,0,0,.3)"></div><div class="a" style="left:748.5px;top:541px;width:12px;height:12px;border-radius:50%;background:#fff;border:1px solid #c9c9cf;box-shadow:0 0 1px rgba(0,0,0,.3)"></div><div class="a" style="left:986.5px;top:541px;width:12px;height:12px;border-radius:50%;background:#fff;border:1px solid #c9c9cf;box-shadow:0 0 1px rgba(0,0,0,.3)"></div><div class="a" style="left:751px;top:447px;width:7px;height:19px;border-radius:4px;background:#fff;border:1px solid #c9c9cf"></div><div class="a" style="left:989px;top:447px;width:7px;height:19px;border-radius:4px;background:#fff;border:1px solid #c9c9cf"></div><div class="a" style="left:862px;top:582px;width:23px;height:23px;border-radius:50%;background:#fff;border:1px solid #d0d0d5"></div><svg class="a" style="left:867px;top:587px" width="13" height="13" viewBox="0 0 13 13"><g fill="none" stroke="#222" stroke-width="1.3" stroke-linecap="round" stroke-linejoin="round"><path d="M11 5.5 A4.8 4.8 0 0 0 2.5 3.2 M2 7.5 A4.8 4.8 0 0 0 10.5 9.8"/><path d="M2.2 0.8 V3.5 H5 M10.8 12.2 V9.5 H8"/></g></svg><div class="t" style="left:827.05px;top:617.50px;font-size:16px;line-height:16px;color:#ffffff;font-weight:700;font-family:'Liberation Sans',sans-serif;transform:scaleX(0.9524);-webkit-text-stroke:0.2px #fff">차O우</div><div class="t" style="left:873.00px;top:621.00px;font-size:13px;line-height:13px;color:#04100a;font-weight:700;font-family:'Liberation Sans',sans-serif;-webkit-text-stroke:0.5px #04100a">수강생</div><div class="a" style="left:1022px;top:363px;width:42px;height:42px;border-radius:50%;background:#2a2b2e;box-shadow:0 2px 8px rgba(0,0,0,.5)"></div><svg class="a" style="left:1032px;top:374px" width="22" height="20" viewBox="0 0 22 20"><g fill="none" stroke="#fff" stroke-width="1.6" stroke-linecap="round" stroke-linejoin="round"><path d="M12 3.3 A7 6 0 1 0 14.5 12.5 C 13.5 14.5 11 15.5 8.5 15.5 L 7.5 17.5 L 6.5 15.2"/><path d="M17.5 1 V7 M14.5 4 H20.5"/></g></svg><div class="t" style="left:731.00px;top:720.00px;font-size:13px;line-height:13px;color:#f2f2f3;font-weight:700;font-family:'Liberation Sans',sans-serif;transform:scaleX(0.9722);">페이지 2 - 페</div><svg class="a" style="left:821px;top:723px" width="14" height="8" viewBox="0 0 14 8"><path d="M1 7 L7 1 L13 7" fill="none" stroke="#8f9095" stroke-width="1.5" stroke-linecap="round" stroke-linejoin="round"/></svg><svg class="a" style="left:928px;top:717px" width="16" height="19" viewBox="0 0 16 19"><g fill="none" stroke="#d0d1d4" stroke-width="1.5"><rect x="1" y="8" width="14" height="10" rx="2"/><path d="M4 8 V5 a4 4 0 0 1 8 -0.5"/></g></svg><svg class="a" style="left:963px;top:718px" width="18" height="18" viewBox="0 0 18 18"><g fill="none" stroke="#d0d1d4" stroke-width="1.5"><path d="M4 13 H2.5 a1.5 1.5 0 0 1 -1.5 -1.5 V2.5 A1.5 1.5 0 0 1 2.5 1 H11.5 A1.5 1.5 0 0 1 13 2.5 V4"/><rect x="5" y="5" width="12" height="12" rx="1.5"/></g></svg><svg class="a" style="left:1000px;top:717px" width="17" height="19" viewBox="0 0 17 19"><g fill="none" stroke="#d0d1d4" stroke-width="1.5"><path d="M1 4 H16 M6 4 V1.5 H11 V4 M3 4 L3.8 16.5 H13.2 L14 4"/></g></svg><svg class="a" style="left:1036px;top:717px" width="18" height="19" viewBox="0 0 18 19"><g fill="none" stroke="#d0d1d4" stroke-width="1.5"><path d="M7 3 H2.5 A1.5 1.5 0 0 0 1 4.5 V16.5 M13 1 V9 M9 5 H17"/></g></svg><div class="a" style="left:1229px;top:661px;width:44px;height:44px;border-radius:50%;box-shadow:0 2px 8px rgba(0,0,0,.5)"></div><svg class="a" style="left:1229px;top:661px" width="44" height="44" viewBox="0 0 44 44"><circle cx="22" cy="22" r="21" fill="#2b2b2e" stroke="url(#aig)" stroke-width="1.6"/><defs><linearGradient id="aig" x1="0" y1="0" x2="1" y2="1"><stop offset="0" stop-color="#3ab0f0"/><stop offset=".55" stop-color="#5a60e8"/><stop offset="1" stop-color="#7a3ee8"/></linearGradient></defs><path d="M22.5 14.600000000000001 Q24.194 20.606 30.2 22.3 Q24.194 23.994 22.5 30.0 Q20.806 23.994 14.8 22.3 Q20.806 20.606 22.5 14.600000000000001 Z M15.7 11.5 Q16.58 14.62 19.7 15.5 Q16.58 16.38 15.7 19.5 Q14.819999999999999 16.38 11.7 15.5 Q14.819999999999999 14.62 15.7 11.5 Z M29.1 12.6 Q29.738000000000003 14.862 32.0 15.5 Q29.738000000000003 16.138 29.1 18.4 Q28.462 16.138 26.200000000000003 15.5 Q28.462 14.862 29.1 12.6 Z" fill="#fff"/><circle cx="15.9" cy="29" r="2.1" fill="#fff"/></svg><div class="a" style="left:449px;top:729px;width:848px;height:39px;background:#252628;border-top:1px solid #3a3b3e"></div><svg class="a" style="left:835px;top:716px" width="80" height="15" viewBox="0 0 80 15"><path d="M0 14 C 10 14 12 1 24 1 H56 C 68 1 70 14 80 14 V15 H0 Z" fill="#252628" stroke="#3a3b3e" stroke-width="1"/><rect x="0" y="14" width="80" height="2" fill="#252628"/></svg><svg class="a" style="left:868px;top:721px" width="10" height="6" viewBox="0 0 10 6"><path d="M1 5 L5 1 L9 5" fill="none" stroke="#e0e0e3" stroke-width="1.5" stroke-linecap="round" stroke-linejoin="round"/></svg><svg class="a" style="left:465px;top:741px" width="19" height="17" viewBox="0 0 19 17"><g fill="none" stroke="#e0e0e3" stroke-width="1.6" stroke-linecap="round"><path d="M1 2 H14 M1 6 H11 M1 10 H7 M1 14 H5"/><path d="M9 15.5 L10 12 L16.5 5.5 a1.5 1.5 0 0 1 2.1 2.1 L12 14 Z"/></g></svg><div class="t" style="left:488.04px;top:743.00px;font-size:13px;line-height:13px;color:#eeeeef;font-weight:400;font-family:'Liberation Sans',sans-serif;transform:scaleX(0.9552);">발표자 노트</div><div class="t" style="left:801.02px;top:742.50px;font-size:14px;line-height:14px;color:#eeeeef;font-weight:400;font-family:'Liberation Sans',sans-serif;transform:scaleX(0.9839);-webkit-text-stroke:0.3px #eeeeef">1/2 페이지</div><div class="a" style="left:879px;top:740px;width:1px;height:20px;background:#3e3f42"></div><div class="a" style="left:889px;top:748px;width:199px;height:4px;border-radius:2px;background:#55565a"></div><div class="a" style="left:889px;top:748px;width:48px;height:4px;border-radius:2px;background:#8e8f93"></div><div class="a" style="left:928px;top:741px;width:18px;height:18px;border-radius:50%;background:#fff;box-shadow:0 1px 3px rgba(0,0,0,.5)"></div><div class="t" style="left:1113.03px;top:742.00px;font-size:15px;line-height:15px;color:#eeeeef;font-weight:400;font-family:'Liberation Sans',sans-serif;transform:scaleX(0.9655);-webkit-text-stroke:0.35px #eeeeef">26%</div><svg class="a" style="left:1185px;top:742px" width="16" height="16" viewBox="0 0 16 16"><g fill="none" stroke="#e0e0e3" stroke-width="1.5"><rect x="1" y="1" width="5.5" height="5.5" rx="1.2"/><rect x="9.5" y="1" width="5.5" height="5.5" rx="1.2"/><rect x="1" y="9.5" width="5.5" height="5.5" rx="1.2"/><rect x="9.5" y="9.5" width="5.5" height="5.5" rx="1.2"/></g></svg><svg class="a" style="left:1224px;top:741px" width="18" height="18" viewBox="0 0 18 18"><g fill="none" stroke="#e0e0e3" stroke-width="1.6" stroke-linecap="round" stroke-linejoin="round"><path d="M11 1 H17 V7 M17 1 L10.5 7.5 M7 17 H1 V11 M1 17 L7.5 10.5"/></g></svg><svg class="a" style="left:1263px;top:740px" width="20" height="20" viewBox="0 0 20 20"><circle cx="10" cy="10" r="9" fill="none" stroke="#e0e0e3" stroke-width="1.6"/><path d="M7.3 7.6 A2.8 2.8 0 1 1 11 10.2 C 10.2 10.6 10 11 10 12" fill="none" stroke="#e0e0e3" stroke-width="1.6" stroke-linecap="round"/><circle cx="10" cy="14.8" r="1" fill="#e0e0e3"/></svg></body></html>
